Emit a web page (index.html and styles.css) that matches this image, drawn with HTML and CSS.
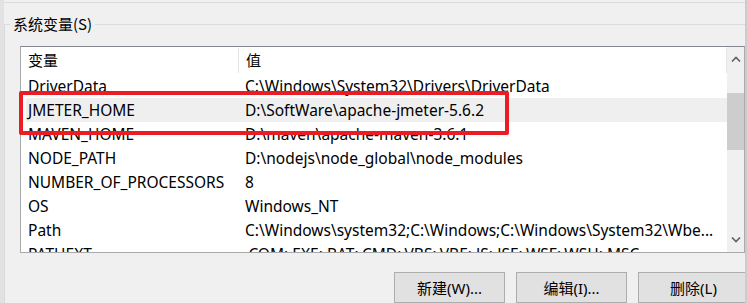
FILE: index.html
```html
<!DOCTYPE html>
<html lang="zh-CN">
<head>
    <meta charset="UTF-8">
    <title>环境变量</title>
    <link rel="stylesheet" href="styles.css">
</head>
<body>
    <div class="window">
        <div class="top-rule"></div>

        <fieldset class="group">
            <legend>系统变量(S)</legend>

            <div class="list">
                <div class="list-main">
                    <div class="row head">
                        <span class="col-name">变量</span>
                        <span class="col-value">值</span>
                    </div>
                    <div class="row"><span class="col-name">DriverData</span><span class="col-value">C:\Windows\System32\Drivers\DriverData</span></div>
                    <div class="row selected"><span class="col-name">JMETER_HOME</span><span class="col-value">D:\SoftWare\apache-jmeter-5.6.2</span></div>
                    <div class="row"><span class="col-name">MAVEN_HOME</span><span class="col-value">D:\maven\apache-maven-3.6.1</span></div>
                    <div class="row"><span class="col-name">NODE_PATH</span><span class="col-value">D:\nodejs\node_global\node_modules</span></div>
                    <div class="row"><span class="col-name">NUMBER_OF_PROCESSORS</span><span class="col-value">8</span></div>
                    <div class="row"><span class="col-name">OS</span><span class="col-value">Windows_NT</span></div>
                    <div class="row"><span class="col-name">Path</span><span class="col-value">C:\Windows\system32;C:\Windows;C:\Windows\System32\Wbe...</span></div>
                    <div class="row"><span class="col-name">PATHEXT</span><span class="col-value">.COM;.EXE;.BAT;.CMD;.VBS;.VBE;.JS;.JSE;.WSF;.WSH;.MSC</span></div>
                </div>

                <div class="scrollbar">
                    <div class="scroll-btn">
                        <svg width="10" height="6" viewBox="0 0 10 6"><path d="M1 5.5 L5 1.5 L9 5.5" fill="none" stroke="#606060" stroke-width="1.6"/></svg>
                    </div>
                    <div class="thumb"></div>
                    <div class="scroll-btn bottom">
                        <svg width="10" height="6" viewBox="0 0 10 6"><path d="M1 0.5 L5 4.5 L9 0.5" fill="none" stroke="#606060" stroke-width="1.6"/></svg>
                    </div>
                </div>

                <!-- marca roja sobre la fila seleccionada -->
                <div class="mark"></div>
            </div>

            <div class="actions">
                <button>新建(W)...</button>
                <button>编辑(I)...</button>
                <button>删除(L)</button>
            </div>
        </fieldset>
    </div>
</body>
</html>
```

FILE: styles.css
```css
body {
    margin: 0;
    background-color: #f0f0f0;
    font-family: "Noto Sans", "Noto Sans CJK SC", sans-serif;
    font-size: 15.5px;
    color: #000;
}
.window {
    width: 747px;
    height: 303px;
    box-sizing: border-box;
    border-left: 4px solid #e2e2e2;
    border-right: 2px solid #cccccc;
    overflow: hidden;
}
.top-rule {
    height: 2px;
    border-bottom: 1px solid #dcdcdc;
}
.group {
    margin: 11px 0 0 0;
    padding: 0 0 0 15px;
    border: none;
    border-top: 1px solid #dcdcdc;
    border-left: 1px solid #dcdcdc;
    min-width: 0;
}
.group legend {
    margin-left: -10px;
    padding: 0 3px;
    line-height: 20px;
    font-size: 15px;
    font-family: "Noto Sans CJK SC", sans-serif;
}
.list {
    position: relative;
    margin-top: 12px;
    width: 725px;
    height: 207px;
    box-sizing: border-box;
    display: flex;
    background-color: #fff;
    border: 1px solid #a9a9a9;
    border-top-color: #828790;
}
.list-main {
    flex: 1;
    overflow: hidden;
}
.row {
    display: flex;
    height: 24px;
    line-height: 24px;
    white-space: nowrap;
}
.row.head {
    height: 27px;
    line-height: 27px;
    font-size: 15px;
}
.row.selected {
    margin-left: 5px;
    background-color: #efefef;
}
.row.selected .col-name {
    width: 210px;
    padding-left: 2px;
}
.col-name {
    width: 210px;
    padding-left: 7px;
    flex-shrink: 0;
}
.col-value {
    padding-left: 7px;
}
.head .col-name {
    border-right: 1px solid #e5e5e5;
    margin: 1px 0 1px 0;
    line-height: 25px;
}
.head .col-value {
    flex: 1;
    border-right: 1px solid #e5e5e5;
    margin: 1px 0;
    line-height: 25px;
}
.scrollbar {
    width: 17px;
    display: flex;
    flex-direction: column;
    background-color: #f0f0f0;
}
.scroll-btn {
    height: 24px;
    display: flex;
    align-items: center;
    justify-content: center;
}
.scroll-btn.bottom {
    margin-top: auto;
}
.thumb {
    margin-top: 22px;
    height: 57px;
    background-color: #cdcdcd;
}
.mark {
    position: absolute;
    left: -2px;
    top: 44px;
    width: 490px;
    height: 44px;
    box-sizing: border-box;
    border: 4px solid #ec1c24;
    border-radius: 2px;
}
.actions {
    display: flex;
    gap: 11px;
    padding: 19px 0 0 374px;
}
.actions button {
    flex-shrink: 0;
    width: 111px;
    height: 31px;
    padding: 0;
    background-color: #e1e1e1;
    border: 1px solid #adadad;
    font-family: "Noto Sans", "Noto Sans CJK SC", sans-serif;
    font-size: 15px;
    color: #000;
}
```
